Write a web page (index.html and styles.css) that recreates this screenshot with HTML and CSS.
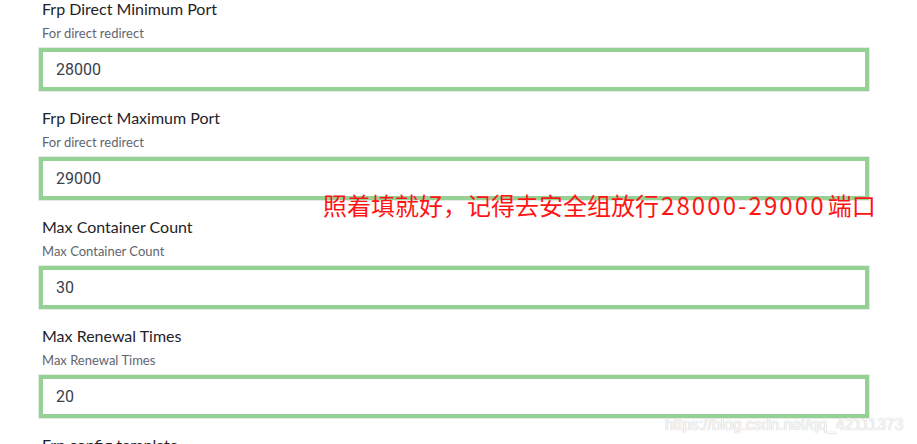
FILE: index.html
```html
<!DOCTYPE html>
<html>
<head>
<meta charset="utf-8">
<link rel="stylesheet" href="styles.css">
</head>
<body>
<div class="form">
  <div class="field">
    <div class="label">Frp Direct Minimum Port</div>
    <div class="help">For direct redirect</div>
    <div class="input">28000</div>
  </div>
  <div class="field">
    <div class="label">Frp Direct Maximum Port</div>
    <div class="help">For direct redirect</div>
    <div class="input">29000</div>
  </div>
  <div class="field">
    <div class="label">Max Container Count</div>
    <div class="help">Max Container Count</div>
    <div class="input">30</div>
  </div>
  <div class="field">
    <div class="label">Max Renewal Times</div>
    <div class="help">Max Renewal Times</div>
    <div class="input">20</div>
  </div>
  <div class="field">
    <div class="label">Frp config template</div>
  </div>
</div>
<div class="note">照着填就好，记得去安全组放行<span class="num">28000-29000</span>端口</div>
<div class="watermark">https://blog.csdn.net/qq_42111373</div>
</body>
</html>
```
FILE: styles.css
```css
html, body {
  margin: 0;
  padding: 0;
  background: #fff;
  overflow: hidden;
}
body {
  width: 917px;
  height: 444px;
  position: relative;
}
.form {
  padding-left: 38px;
  width: 832px;
  display: flex;
  flex-direction: column;
}
.field {
  display: flex;
  flex-direction: column;
  margin-bottom: 17px;
}
.label {
  font-family: Lato, "Noto Sans", sans-serif;
  font-size: 16px;
  line-height: 18px;
  color: #1f2328;
  padding-left: 4px;
}
.help {
  margin-top: 7px;
  font-family: Lato, "Noto Sans", sans-serif;
  font-size: 13px;
  line-height: 17px;
  color: #5f6570;
  padding-left: 4px;
}
.input {
  margin-top: 5px;
  height: 45px;
  box-sizing: border-box;
  border: 1px solid #e3ede3;
  box-shadow: inset 0 0 0 4px #95d195;
  padding-left: 17px;
  font-family: Roboto, "Liberation Sans", sans-serif;
  font-size: 16px;
  line-height: 43px;
  color: #3a404b;
}
.note {
  position: absolute;
  left: 323px;
  top: 189px;
  font-family: "Noto Sans CJK SC", sans-serif;
  font-size: 24px;
  line-height: 32px;
  color: #ff1414;
  white-space: nowrap;
}
.note .num {
  letter-spacing: 2.1px;
  margin: 0 2px;
}
.watermark {
  position: absolute;
  left: 665px;
  top: 414px;
  font-family: "Liberation Sans", sans-serif;
  font-size: 15.7px;
  line-height: 22px;
  color: rgba(255, 255, 255, 0.92);
  text-shadow: 0 0 1px #c8c8c8, 0 0 1px #c8c8c8;
  white-space: nowrap;
}
```
